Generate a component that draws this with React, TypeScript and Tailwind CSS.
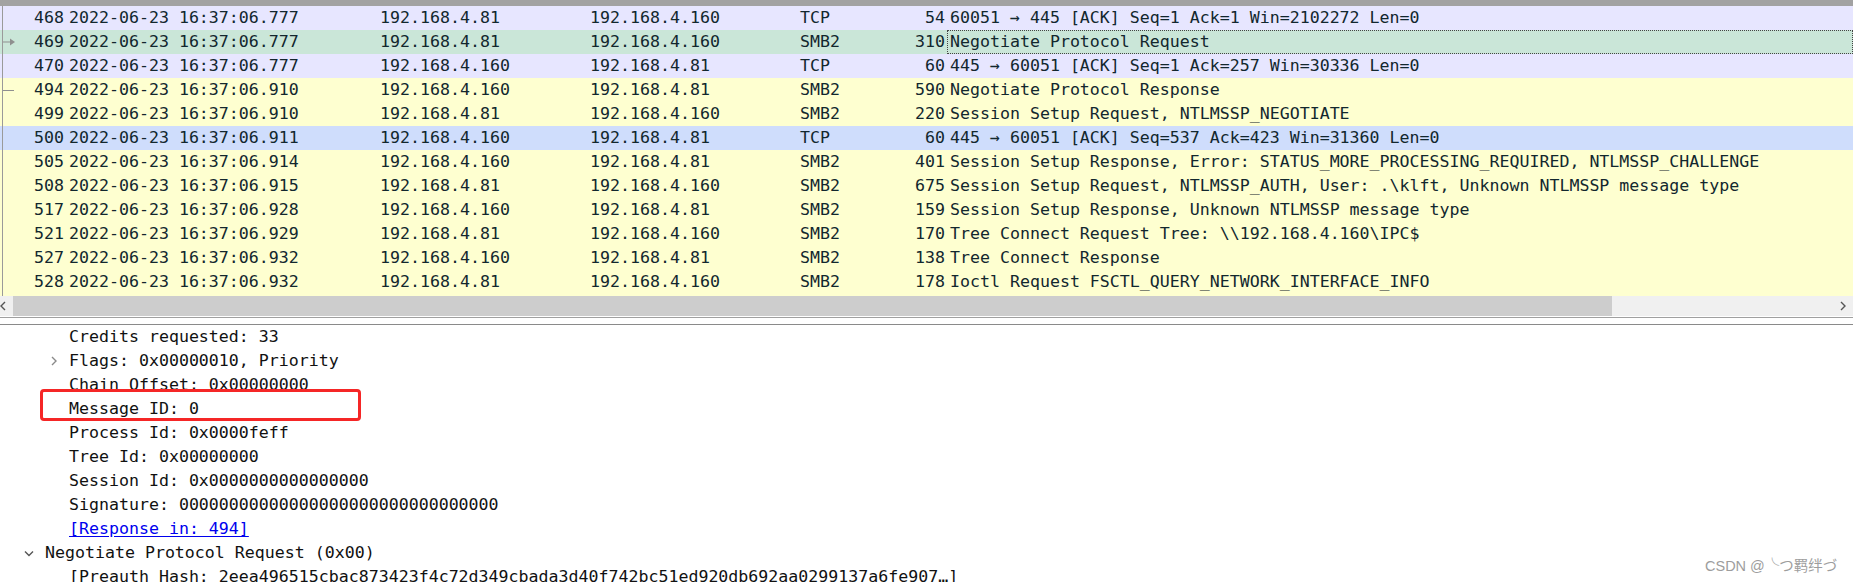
import React from "react";

type Row = {
  no: string;
  time: string;
  src: string;
  dst: string;
  proto: string;
  len: string;
  info: string;
  bg: string;
  focus?: boolean;
};

const rows: Row[] = [
  { no: "468", time: "2022-06-23 16:37:06.777", src: "192.168.4.81", dst: "192.168.4.160", proto: "TCP", len: "54", info: "60051 → 445 [ACK] Seq=1 Ack=1 Win=2102272 Len=0", bg: "bg-[#e7e6ff]" },
  { no: "469", time: "2022-06-23 16:37:06.777", src: "192.168.4.81", dst: "192.168.4.160", proto: "SMB2", len: "310", info: "Negotiate Protocol Request", bg: "bg-[#cae6d8]", focus: true },
  { no: "470", time: "2022-06-23 16:37:06.777", src: "192.168.4.160", dst: "192.168.4.81", proto: "TCP", len: "60", info: "445 → 60051 [ACK] Seq=1 Ack=257 Win=30336 Len=0", bg: "bg-[#e7e6ff]" },
  { no: "494", time: "2022-06-23 16:37:06.910", src: "192.168.4.160", dst: "192.168.4.81", proto: "SMB2", len: "590", info: "Negotiate Protocol Response", bg: "bg-[#feffd0]" },
  { no: "499", time: "2022-06-23 16:37:06.910", src: "192.168.4.81", dst: "192.168.4.160", proto: "SMB2", len: "220", info: "Session Setup Request, NTLMSSP_NEGOTIATE", bg: "bg-[#feffd0]" },
  { no: "500", time: "2022-06-23 16:37:06.911", src: "192.168.4.160", dst: "192.168.4.81", proto: "TCP", len: "60", info: "445 → 60051 [ACK] Seq=537 Ack=423 Win=31360 Len=0", bg: "bg-[#cfddfc]" },
  { no: "505", time: "2022-06-23 16:37:06.914", src: "192.168.4.160", dst: "192.168.4.81", proto: "SMB2", len: "401", info: "Session Setup Response, Error: STATUS_MORE_PROCESSING_REQUIRED, NTLMSSP_CHALLENGE", bg: "bg-[#feffd0]" },
  { no: "508", time: "2022-06-23 16:37:06.915", src: "192.168.4.81", dst: "192.168.4.160", proto: "SMB2", len: "675", info: "Session Setup Request, NTLMSSP_AUTH, User: .\\klft, Unknown NTLMSSP message type", bg: "bg-[#feffd0]" },
  { no: "517", time: "2022-06-23 16:37:06.928", src: "192.168.4.160", dst: "192.168.4.81", proto: "SMB2", len: "159", info: "Session Setup Response, Unknown NTLMSSP message type", bg: "bg-[#feffd0]" },
  { no: "521", time: "2022-06-23 16:37:06.929", src: "192.168.4.81", dst: "192.168.4.160", proto: "SMB2", len: "170", info: "Tree Connect Request Tree: \\\\192.168.4.160\\IPC$", bg: "bg-[#feffd0]" },
  { no: "527", time: "2022-06-23 16:37:06.932", src: "192.168.4.160", dst: "192.168.4.81", proto: "SMB2", len: "138", info: "Tree Connect Response", bg: "bg-[#feffd0]" },
  { no: "528", time: "2022-06-23 16:37:06.932", src: "192.168.4.81", dst: "192.168.4.160", proto: "SMB2", len: "178", info: "Ioctl Request FSCTL_QUERY_NETWORK_INTERFACE_INFO", bg: "bg-[#feffd0]" },
];

function PacketRow({ r, ind }: { r: Row; ind?: React.ReactNode }) {
  return (
    <div className={`relative flex h-[24px] items-center leading-[24px] whitespace-nowrap text-[#12272e] ${r.bg}`}>
      {ind}
      <div className="w-[64px] text-right">{r.no}</div>
      <div className="ml-[5px] w-[311px]">{r.time}</div>
      <div className="w-[210px]">{r.src}</div>
      <div className="w-[210px]">{r.dst}</div>
      <div className="w-[60px]">{r.proto}</div>
      <div className="w-[85px] text-right">{r.len}</div>
      <div
        className={`ml-[2px] h-[24px] flex-1 pl-[3px] ${
          r.focus ? "outline-1 outline-dotted outline-offset-[-1px] outline-[#444]" : ""
        }`}
      >
        {r.info}
      </div>
    </div>
  );
}

function Chevron({ dir, className }: { dir: "left" | "right" | "down"; className?: string }) {
  const d =
    dir === "left" ? "M6 1 L2 5 L6 9" : dir === "right" ? "M2 1 L6 5 L2 9" : "M1 2.5 L5 6.5 L9 2.5";
  return (
    <svg width="10" height="10" viewBox="0 0 10 10" className={className}>
      <path d={d} fill="none" stroke="currentColor" strokeWidth="1.4" />
    </svg>
  );
}

function DetailRow({
  children,
  level,
  chevron,
}: {
  children: React.ReactNode;
  level: 1 | 2;
  chevron?: "right" | "down";
}) {
  return (
    <div
      className={`relative flex h-[24px] items-center leading-[24px] whitespace-nowrap text-[#111] ${
        level === 1 ? "pl-[45px]" : "pl-[69px]"
      }`}
    >
      {chevron === "right" && (
        <Chevron dir="right" className="absolute left-[50px] top-[7px] text-[#8a8a8a]" />
      )}
      {chevron === "down" && (
        <Chevron dir="down" className="absolute left-[24px] top-[8px] text-[#555]" />
      )}
      {children}
    </div>
  );
}

export default function App() {
  const mono = "font-['DejaVu_Sans_Mono',monospace] text-[16.6px]";
  return (
    <div className={`relative h-[582px] w-[1853px] overflow-hidden bg-white ${mono}`}>
      {/* packet list */}
      <div className="relative">
        <div className="h-[6px] bg-[#a2a2a2]" />
        {rows.map((r, i) => (
          <PacketRow
            key={r.no}
            r={r}
            ind={
              i === 1 ? (
                <svg width="16" height="24" viewBox="0 0 16 24" className="absolute left-0 top-0">
                  <line x1="3" y1="12" x2="11" y2="12" stroke="#8f8f8f" strokeWidth="1" />
                  <path d="M10 8.5 L15 12 L10 15.5 Z" fill="#8f8f8f" />
                </svg>
              ) : i === 3 ? (
                <svg width="16" height="24" viewBox="0 0 16 24" className="absolute left-0 top-0">
                  <line x1="3" y1="12.5" x2="14" y2="12.5" stroke="#8f8f8f" strokeWidth="1" />
                </svg>
              ) : null
            }
          />
        ))}
        <div className="h-[2px] bg-[#feffd0]" />
        <div className="absolute left-[2px] top-[6px] h-[290px] w-px bg-[#9a9a9a]" />
      </div>

      {/* horizontal scrollbar */}
      <div className="flex h-[20px] items-center bg-[#f0f0f0]">
        <div className="flex w-[13px] items-center justify-start">
          <Chevron dir="left" className="-ml-[1px] text-[#555]" />
        </div>
        <div className="h-[20px] w-[1599px] bg-[#cdcdcd]" />
        <div className="flex-1" />
        <div className="flex w-[14px] items-center justify-start">
          <Chevron dir="right" className="text-[#555]" />
        </div>
      </div>

      {/* splitter */}
      <div className="h-px bg-white" />
      <div className="h-px bg-[#a0a0a0]" />
      <div className="h-[6px] bg-white" />
      <div className="h-px bg-[#8a8a8a]" />

      {/* details */}
      <div className="relative">
        <DetailRow level={2}>Credits requested: 33</DetailRow>
        <DetailRow level={2} chevron="right">Flags: 0x00000010, Priority</DetailRow>
        <DetailRow level={2}>Chain Offset: 0x00000000</DetailRow>
        <DetailRow level={2}>Message ID: 0</DetailRow>
        <DetailRow level={2}>Process Id: 0x0000feff</DetailRow>
        <DetailRow level={2}>Tree Id: 0x00000000</DetailRow>
        <DetailRow level={2}>Session Id: 0x0000000000000000</DetailRow>
        <DetailRow level={2}>Signature: 00000000000000000000000000000000</DetailRow>
        <DetailRow level={2}>
          <span className="text-[#0000ee] underline underline-offset-2">[Response in: 494]</span>
        </DetailRow>
        <DetailRow level={1} chevron="down">Negotiate Protocol Request (0x00)</DetailRow>
        <DetailRow level={2}>
          [Preauth Hash: 2eea496515cbac873423f4c72d349cbada3d40f742bc51ed920db692aa0299137a6fe907…]
        </DetailRow>
      </div>

      {/* red annotation box */}
      <div className="absolute left-[40px] top-[389px] h-[32px] w-[321px] rounded-[4px] border-[3px] border-[#f52626]" />

      {/* watermark */}
      <div className="absolute left-[1705px] top-[556px] font-['Liberation_Sans','Noto_Sans_CJK_SC',sans-serif] text-[14.5px] leading-[20px] text-[#9d9d9d] whitespace-nowrap">
        CSDN @╰つ羁绊づ
      </div>
    </div>
  );
}
